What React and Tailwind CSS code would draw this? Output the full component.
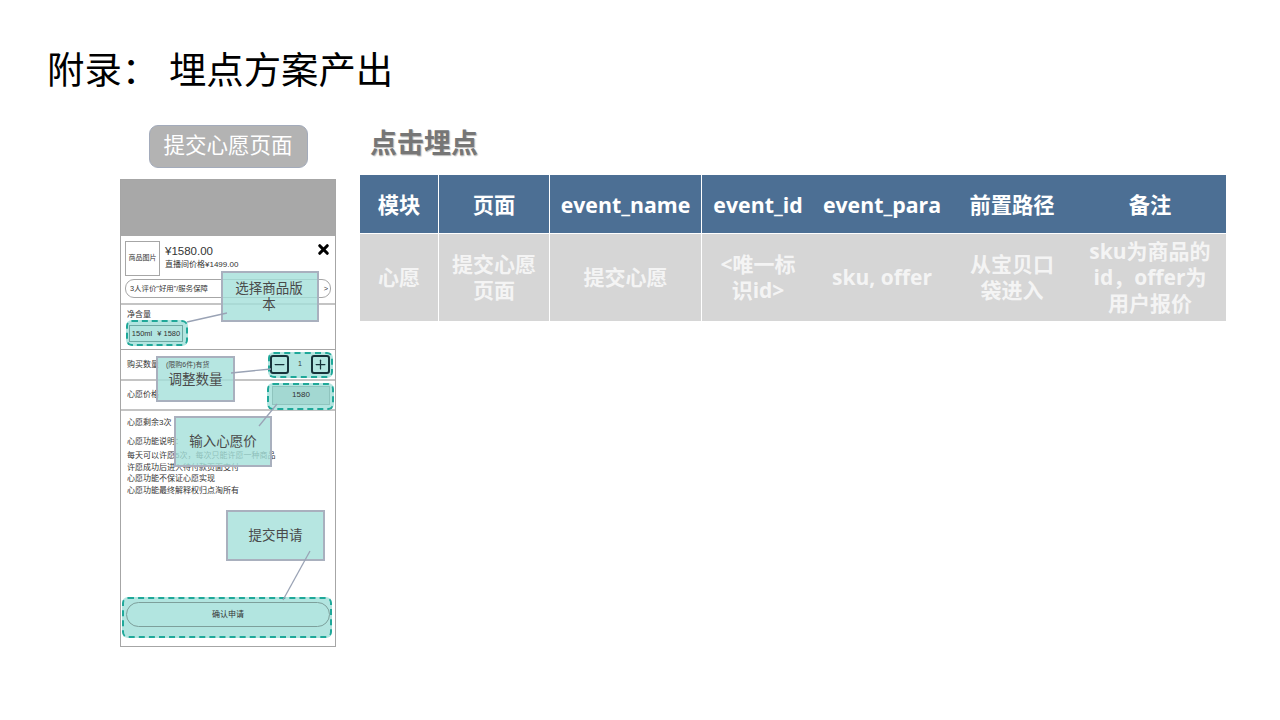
import React from 'react';
import { X, Minus, Plus } from 'lucide-react';

const CJK = 'font-["Liberation_Sans","Noto_Sans_CJK_SC",sans-serif]';
const HEAD = 'font-["Open_Sans","Noto_Sans_CJK_SC",sans-serif]';

const columns = [
  { head: '模块', cell: '心愿', w: 'w-[79px]', line: true },
  { head: '页面', cell: '提交心愿页面', w: 'w-[111px]', line: true, pad: 'px-[10px]' },
  { head: 'event_name', cell: '提交心愿', w: 'w-[152px]', line: true },
  { head: 'event_id', cell: '<唯一标识id>', w: 'w-[112px]', pad: 'px-[14px]' },
  { head: 'event_para', cell: 'sku, offer', w: 'w-[136px]' },
  { head: '前置路径', cell: '从宝贝口袋进入', w: 'w-[124px]', pad: 'px-[18px]' },
  { head: '备注', cell: 'sku为商品的id，offer为用户报价', w: 'w-[152px]', pad: 'px-[10px]' },
];

function Callout({ className, children }) {
  return (
    <div className={`absolute z-20 flex items-center justify-center border-2 border-[#a9b0be] bg-[#a4e0da]/80 text-center text-[13.5px] leading-[16px] text-[#4a4a4a] ${className}`}>
      {children}
    </div>
  );
}

function Dashed({ className }) {
  return <div className={`absolute z-0 rounded-[6px] border-2 border-dashed border-[#1fa899] bg-[#b2e5e0] ${className}`} />;
}

function Stepper() {
  return (
    <div className="relative z-10 flex items-center">
      <Minus size={19} strokeWidth={2} className="rounded-[3px] border-2 border-[#16323a] text-[#16323a]" />
      <span className="w-[22px] text-center text-[7px]">1</span>
      <Plus size={19} strokeWidth={2} className="rounded-[3px] border-2 border-[#16323a] text-[#16323a]" />
    </div>
  );
}

function Phone() {
  return (
    <div className={`relative flex h-[468px] w-[216px] flex-col border border-[#a6a6a6] bg-white text-[#333] ${CJK}`}>
      <div className="h-[56px] bg-[#a8a8a8]" />

      <div className="flex h-[69px] flex-col border-b-2 border-[#c4c4c4] px-[4px] pt-[5px]">
        <div className="flex gap-[5px]">
          <div className="flex h-[35px] w-[35px] items-center justify-center border border-[#a6a6a6] text-[7px]">商品图片</div>
          <div className="flex-1 pt-[3px]">
            <div className="text-[11.5px] leading-[15px]">¥1580.00</div>
            <div className="text-[8px] leading-[12px]">直播间价格¥1499.00</div>
          </div>
          <X size={15} strokeWidth={5} className="mt-[1px] text-black" />
        </div>
        <div className="mt-[3px] flex h-[19px] items-center justify-between rounded-[9px] border border-[#a6a6a6] pl-[4px] pr-[2px] text-[7.4px]">
          <span>3人评价"好用"/服务保障</span>
          <span>&gt;</span>
        </div>
      </div>

      <div className="h-[45px] border-b border-[#a6a6a6] px-[6px] pt-[3px] text-[8px] leading-[13px]">
        <div>净含量</div>
        <div className="relative z-10 ml-[2px] mt-[4px] flex h-[17px] w-[54px] items-center justify-center gap-[5px] border border-[#6fa8a3] text-[7.5px]">
          <span>150ml</span>
          <span>¥ 1580</span>
        </div>
      </div>

      <div className="flex h-[31px] items-center justify-between border-b-2 border-[#c4c4c4] pl-[6px] pr-[5px] text-[8px]">
        <span>购买数量</span>
        <Stepper />
      </div>

      <div className="flex h-[30px] items-center justify-between border-b-2 border-[#c4c4c4] pl-[6px] pr-[5px] text-[8px]">
        <span>心愿价格</span>
        <div className="relative z-10 flex h-[19px] w-[58px] items-center justify-center border border-[#8fc4be] bg-[#a3d8d2]">1580</div>
      </div>

      <div className="flex-1 px-[6px] pt-[6px] text-[8px]">
        <div className="leading-[12px]">心愿剩余3次</div>
        <div className="mt-[7px] leading-[12px]">心愿功能说明：</div>
        <div className="mt-[2px] leading-[11.7px]">
          <div>每天可以许愿5次，每次只能许愿一种商品</div>
          <div>许愿成功后进入待付款页面支付</div>
          <div>心愿功能不保证心愿实现</div>
          <div>心愿功能最终解释权归点淘所有</div>
        </div>
      </div>

      <div className="relative z-10 mb-[19px] ml-[5px] flex h-[25px] w-[204px] items-center justify-center rounded-[13px] border border-[#7d9f9b] text-[8px]">确认申请</div>

      {/* dashed hot zones, offsets are relative to the phone box */}
      <Dashed className="left-[5px] top-[140px] h-[26px] w-[62px]" />
      <Dashed className="left-[147px] top-[172px] h-[26px] w-[65px]" />
      <Dashed className="left-[146px] top-[203px] h-[27px] w-[67px]" />
      <Dashed className="left-[1px] top-[417px] h-[41px] w-[210px]" />

      <Callout className="left-[100px] top-[91px] h-[51px] w-[98px] pl-[12px] pr-[14px]">选择商品版本</Callout>
      <Callout className="left-[35px] top-[176px] h-[46px] w-[79px] pt-[2px]">
        <span>调整数量</span>
        <span className="absolute left-[8px] top-[2px] text-[7px] leading-[10px]">(限购6件)有货</span>
      </Callout>
      <Callout className="left-[53px] top-[236px] h-[51px] w-[98px]">输入心愿价</Callout>
      <Callout className="left-[105px] top-[330px] h-[51px] w-[99px]">提交申请</Callout>

      {/* leader lines run over the callouts */}
      <svg className="pointer-events-none absolute left-0 top-0 z-30" width="216" height="468" fill="none" stroke="#9aa3b5" strokeWidth="1.3">
        <line x1="66" y1="142" x2="106" y2="133" />
        <line x1="110" y1="193" x2="150" y2="189" />
        <line x1="138" y1="246" x2="156" y2="224" />
        <line x1="162" y1="420" x2="189" y2="371" />
      </svg>
    </div>
  );
}

export default function App() {
  return (
    <div className={`h-[720px] w-[1280px] overflow-hidden bg-white ${HEAD}`}>
      <h1 className="pl-[47px] pt-[46px] text-[37.4px] leading-[48px] text-black">附录： 埋点方案产出</h1>

      <div className="mt-[31px] flex">
        <div className="ml-[120px] flex w-[216px] flex-col items-center">
          <div className="flex h-[43px] w-[159px] items-center justify-center rounded-[9px] border border-[#a3abbb] bg-[#b3b3b3] pb-[3px] text-[21.5px] text-white">提交心愿页面</div>
          <div className="mt-[11px]">
            <Phone />
          </div>
        </div>

        <div className="ml-[24px]">
          <h2 className="pl-[10px] text-[27px] font-bold leading-[36px] text-[#767676] [text-shadow:1px_1px_1px_#bbb]">点击埋点</h2>
          <div className="mt-[14px] flex w-[866px]">
            {columns.map((col) => (
              <div key={col.head} className={`${col.w} flex flex-col ${col.line ? 'border-r border-white' : ''} text-center font-bold`}>
                <div className="flex h-[59px] items-center justify-center whitespace-nowrap border-b border-white bg-[#4c6f94] pt-[1px] text-[21.3px] text-white">{col.head}</div>
                <div className={`flex h-[87px] items-center justify-center bg-[#d6d6d6] pb-[2px] text-[21px] leading-[26px] text-[#f4f4f4] ${col.pad || ''}`}>{col.cell}</div>
              </div>
            ))}
          </div>
        </div>
      </div>
    </div>
  );
}
